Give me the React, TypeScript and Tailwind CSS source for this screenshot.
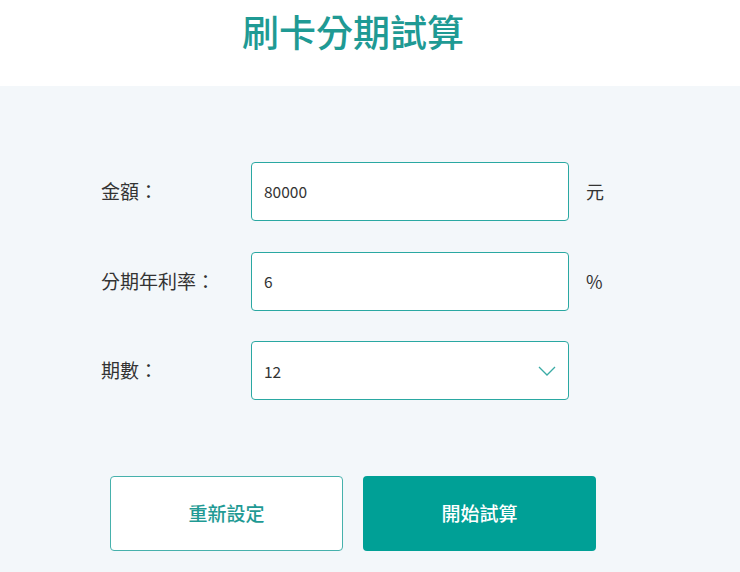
import React from "react";

export default function App() {
  const font = { fontFamily: '"Noto Sans CJK TC", "Noto Sans", sans-serif' };
  return (
    <div className="w-[740px] h-[572px] overflow-hidden bg-[#f3f7fa] text-[#333]" style={font}>
      <header className="h-[86px] bg-white w-full">
        <div className="w-[706px] flex justify-center pt-[5px]">
          <h1 className="text-[37px] font-medium text-[#1f9a94] leading-[52px]">刷卡分期試算</h1>
        </div>
      </header>
      <main className="w-[706px] pt-[76px]">
        <div className="flex flex-col gap-[31px]">
          <div className="flex items-center h-[59px]">
            <label className="pl-[101px] w-[251px] text-[19px]">金額：</label>
            <div className="w-[318px] h-[59px] bg-white border border-[#2aa8a2] rounded-[4px] flex items-center pl-[12px] text-[15.5px]">80000</div>
            <span className="ml-[17px] text-[18px]">元</span>
          </div>
          <div className="flex items-center h-[59px]">
            <label className="pl-[101px] w-[251px] text-[19px]">分期年利率：</label>
            <div className="w-[318px] h-[59px] bg-white border border-[#2aa8a2] rounded-[4px] flex items-center pl-[12px] text-[15.5px]">6</div>
            <span className="ml-[17px] text-[18px]">%</span>
          </div>
          <div className="flex items-center h-[59px] -mt-[1px]">
            <label className="pl-[101px] w-[251px] text-[19px]">期數：</label>
            <div className="w-[318px] h-[59px] bg-white border border-[#2aa8a2] rounded-[4px] flex items-center justify-between pl-[12px] pr-[12px] text-[15.5px]">
              <span className="pt-[2px]">12</span>
              <svg width="18" height="10" viewBox="0 0 18 10" fill="none">
                <path d="M1 1 L9 9 L17 1" stroke="#3aaba5" strokeWidth="1.3" />
              </svg>
            </div>
          </div>
        </div>
        <div className="flex justify-center gap-[20px] mt-[76px]">
          <button className="w-[233px] h-[75px] bg-white border border-[#46b1ac] rounded-[4px] text-[19px] font-medium text-[#1f9a94]">重新設定</button>
          <button className="w-[233px] h-[75px] bg-[#00a096] rounded-[4px] text-[19px] font-medium text-white">開始試算</button>
        </div>
      </main>
    </div>
  );
}
